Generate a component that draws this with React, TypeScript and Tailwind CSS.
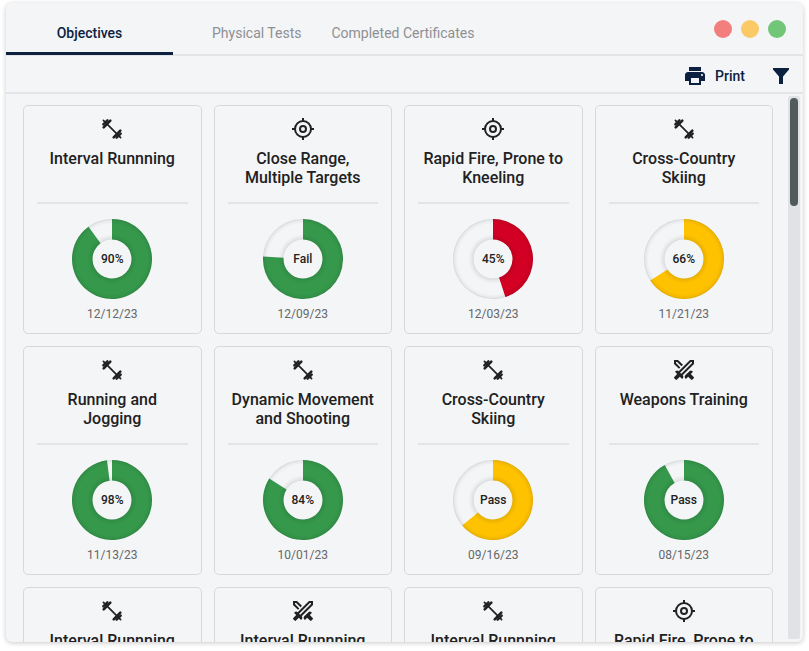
import { useId } from "react";
import { MdPrint } from "react-icons/md";

type IconName = "barbell" | "target" | "swords";

interface Objective {
  title: string;
  icon: IconName;
  label: string;
  share: number;
  color: string;
  date: string;
}

const GREEN = "#35984b";
const RED = "#d20023";
const YELLOW = "#ffc200";

const objectives: Objective[] = [
  { title: "Interval Runnning", icon: "barbell", label: "90%", share: 0.9, color: GREEN, date: "12/12/23" },
  { title: "Close Range, Multiple Targets", icon: "target", label: "Fail", share: 0.76, color: GREEN, date: "12/09/23" },
  { title: "Rapid Fire, Prone to Kneeling", icon: "target", label: "45%", share: 0.45, color: RED, date: "12/03/23" },
  { title: "Cross-Country Skiing", icon: "barbell", label: "66%", share: 0.66, color: YELLOW, date: "11/21/23" },
  { title: "Running and Jogging", icon: "barbell", label: "98%", share: 0.98, color: GREEN, date: "11/13/23" },
  { title: "Dynamic Movement and Shooting", icon: "barbell", label: "84%", share: 0.84, color: GREEN, date: "10/01/23" },
  { title: "Cross-Country Skiing", icon: "barbell", label: "Pass", share: 0.64, color: YELLOW, date: "09/16/23" },
  { title: "Weapons Training", icon: "swords", label: "Pass", share: 0.92, color: GREEN, date: "08/15/23" },
  { title: "Interval Runnning", icon: "barbell", label: "90%", share: 0.9, color: GREEN, date: "08/12/23" },
  { title: "Interval Runnning", icon: "swords", label: "90%", share: 0.9, color: GREEN, date: "08/09/23" },
  { title: "Interval Runnning", icon: "barbell", label: "90%", share: 0.9, color: GREEN, date: "08/03/23" },
  { title: "Rapid Fire, Prone to Kneeling", icon: "target", label: "45%", share: 0.45, color: RED, date: "07/21/23" },
];

function CategoryIcon({ name }: { name: IconName }) {
  if (name === "swords") {
    return (
      <svg viewBox="0 -960 960 960" className="size-6" fill="currentColor" aria-hidden="true">
        <path d="M762-96 645-212l-88 88-28-28q-23-23-23-57t23-57l169-169q23-23 57-23t57 23l28 28-88 88 116 117q12 12 12 28t-12 28l-50 50q-12 12-28 12t-28-12Zm118-628L426-270l5 4q23 23 23 57t-23 57l-28 28-88-88L198-96q-12 12-28 12t-28-12l-50-50q-12-12-12-28t12-28l116-117-88-88 28-28q23-23 57-23t57 23l4 5 454-454h160v160ZM278-526 80-724v-160h160l198 198-57 56-174-174h-47v47l174 174-56 57Zm92 199 430-430v-47h-47L323-374l47 47Z" />
      </svg>
    );
  }
  if (name === "target") {
    return (
      <svg viewBox="0 0 24 24" className="size-6" fill="none" stroke="currentColor" strokeWidth="2" aria-hidden="true">
        <circle cx="12" cy="12" r="8" />
        <circle cx="12" cy="12" r="3" />
        <path d="M12 1v3M12 20v3M1 12h3M20 12h3" />
      </svg>
    );
  }
  return (
    <svg viewBox="0 0 24 24" className="size-6" fill="none" stroke="currentColor" strokeLinecap="round" aria-hidden="true">
      <path d="M3.4 3.4 20.6 20.6" strokeWidth="1.7" />
      <path d="M10.3 3.7 3.7 10.3M20.3 13.7 13.7 20.3" strokeWidth="2.6" />
      <path d="M7.4 3.3 3.3 7.4M20.7 16.6 16.6 20.7" strokeWidth="2.4" />
    </svg>
  );
}

function point(radius: number, angle: number) {
  return `${40 + radius * Math.sin(angle)} ${40 - radius * Math.cos(angle)}`;
}

function Donut({ share, color, label }: { share: number; color: string; label: string }) {
  const id = useId();
  const end = share * 2 * Math.PI;
  const large = share > 0.5 ? 1 : 0;
  const slice = `M${point(40, 0)}A40 40 0 ${large} 1 ${point(40, end)}L${point(19.5, end)}A19.5 19.5 0 ${large} 0 ${point(19.5, 0)}Z`;
  return (
    <div className="grid size-20 place-items-center">
      <svg viewBox="0 0 80 80" className="col-start-1 row-start-1 size-20" aria-hidden="true">
        <defs>
          <radialGradient id={id} gradientUnits="userSpaceOnUse" cx="40" cy="40" r="40">
            <stop offset="0.48" stopOpacity="0.12" />
            <stop offset="0.53" stopOpacity="0.06" />
            <stop offset="0.62" stopOpacity="0" />
            <stop offset="0.88" stopOpacity="0" />
            <stop offset="0.96" stopOpacity="0.05" />
            <stop offset="1" stopOpacity="0.13" />
          </radialGradient>
        </defs>
        <path d={slice} fill={color} />
        <circle cx="40" cy="40" r="29.75" fill="none" stroke={`url(#${id})`} strokeWidth="20.5" />
      </svg>
      <span className="col-start-1 row-start-1 text-xs font-medium text-[#212121]">{label}</span>
    </div>
  );
}

function ObjectiveCard({ item }: { item: Objective }) {
  return (
    <article className="flex flex-col items-center rounded-[5px] border border-[#d6d9dc] px-[13px] pt-[11px] pb-[11px] text-[#212121]">
      <CategoryIcon name={item.icon} />
      <h2 className="mt-2 h-[38px] text-center text-base leading-[19px] font-medium">{item.title}</h2>
      <hr className="mt-[15px] w-full border-t-2 border-[#e2e4e7]" />
      <div className="mt-[15px]">
        <Donut share={item.share} color={item.color} label={item.label} />
      </div>
      <time className="mt-[7px] text-xs leading-4 text-[#666769]">{item.date}</time>
    </article>
  );
}

export default function App() {
  return (
    <div className="h-screen bg-white px-1.5 pt-[3px] pb-[9px] font-[Roboto,sans-serif]">
      <div className="flex h-full flex-col overflow-hidden rounded-md bg-[#f3f5f7] shadow-[0_1px_5px_rgba(0,0,0,0.22)]">
        <header className="flex h-[53px] shrink-0 border-b-2 border-[#e2e4e7] text-sm">
          <nav className="flex h-[52px]" aria-label="Records">
            <button className="w-[167px] border-b-3 border-[#0b213f] pt-[11px] font-medium text-[#0b213f]">Objectives</button>
            <button className="ml-6 px-[15px] pt-2 text-[#8e9093]">Physical Tests</button>
            <button className="px-[15px] pt-2 text-[#8e9093]">Completed Certificates</button>
          </nav>
          <div className="mr-[17px] ml-auto flex items-center gap-[9px]">
            <button aria-label="Close" className="size-[18px] rounded-full bg-[#f27e7e]" />
            <button aria-label="Minimize" className="size-[18px] rounded-full bg-[#fbc965]" />
            <button aria-label="Maximize" className="size-[18px] rounded-full bg-[#71c677]" />
          </div>
        </header>
        <div className="flex h-[38px] shrink-0 items-center justify-end gap-6 border-b-2 border-[#e2e4e7] pt-1 pr-2.5 text-sm font-medium text-[#0b213f]">
          <button className="flex items-center gap-2">
            <MdPrint className="size-6" aria-hidden="true" />
            Print
          </button>
          <button aria-label="Filter">
            <svg viewBox="0 0 24 24" className="size-6" fill="currentColor" aria-hidden="true">
              <path d="M4 4h16v1.5L14 12.5V20h-4v-7.5L4 5.5Z" />
            </svg>
          </button>
        </div>
        <div className="flex min-h-0 flex-1">
          <main className="min-w-0 flex-1 overflow-hidden pt-[11px] pr-[15px] pl-[17px]">
            <div className="grid grid-cols-4 gap-3">
              {objectives.map((item, i) => (
                <ObjectiveCard key={i} item={item} />
              ))}
            </div>
          </main>
          <div className="mt-0.5 mr-[3px] mb-[3px] w-3 rounded-[2px] bg-[#e0e2e5] p-0.5" aria-hidden="true">
            <div className="h-[108px] rounded-full bg-[#525b5b]" />
          </div>
        </div>
      </div>
    </div>
  );
}
